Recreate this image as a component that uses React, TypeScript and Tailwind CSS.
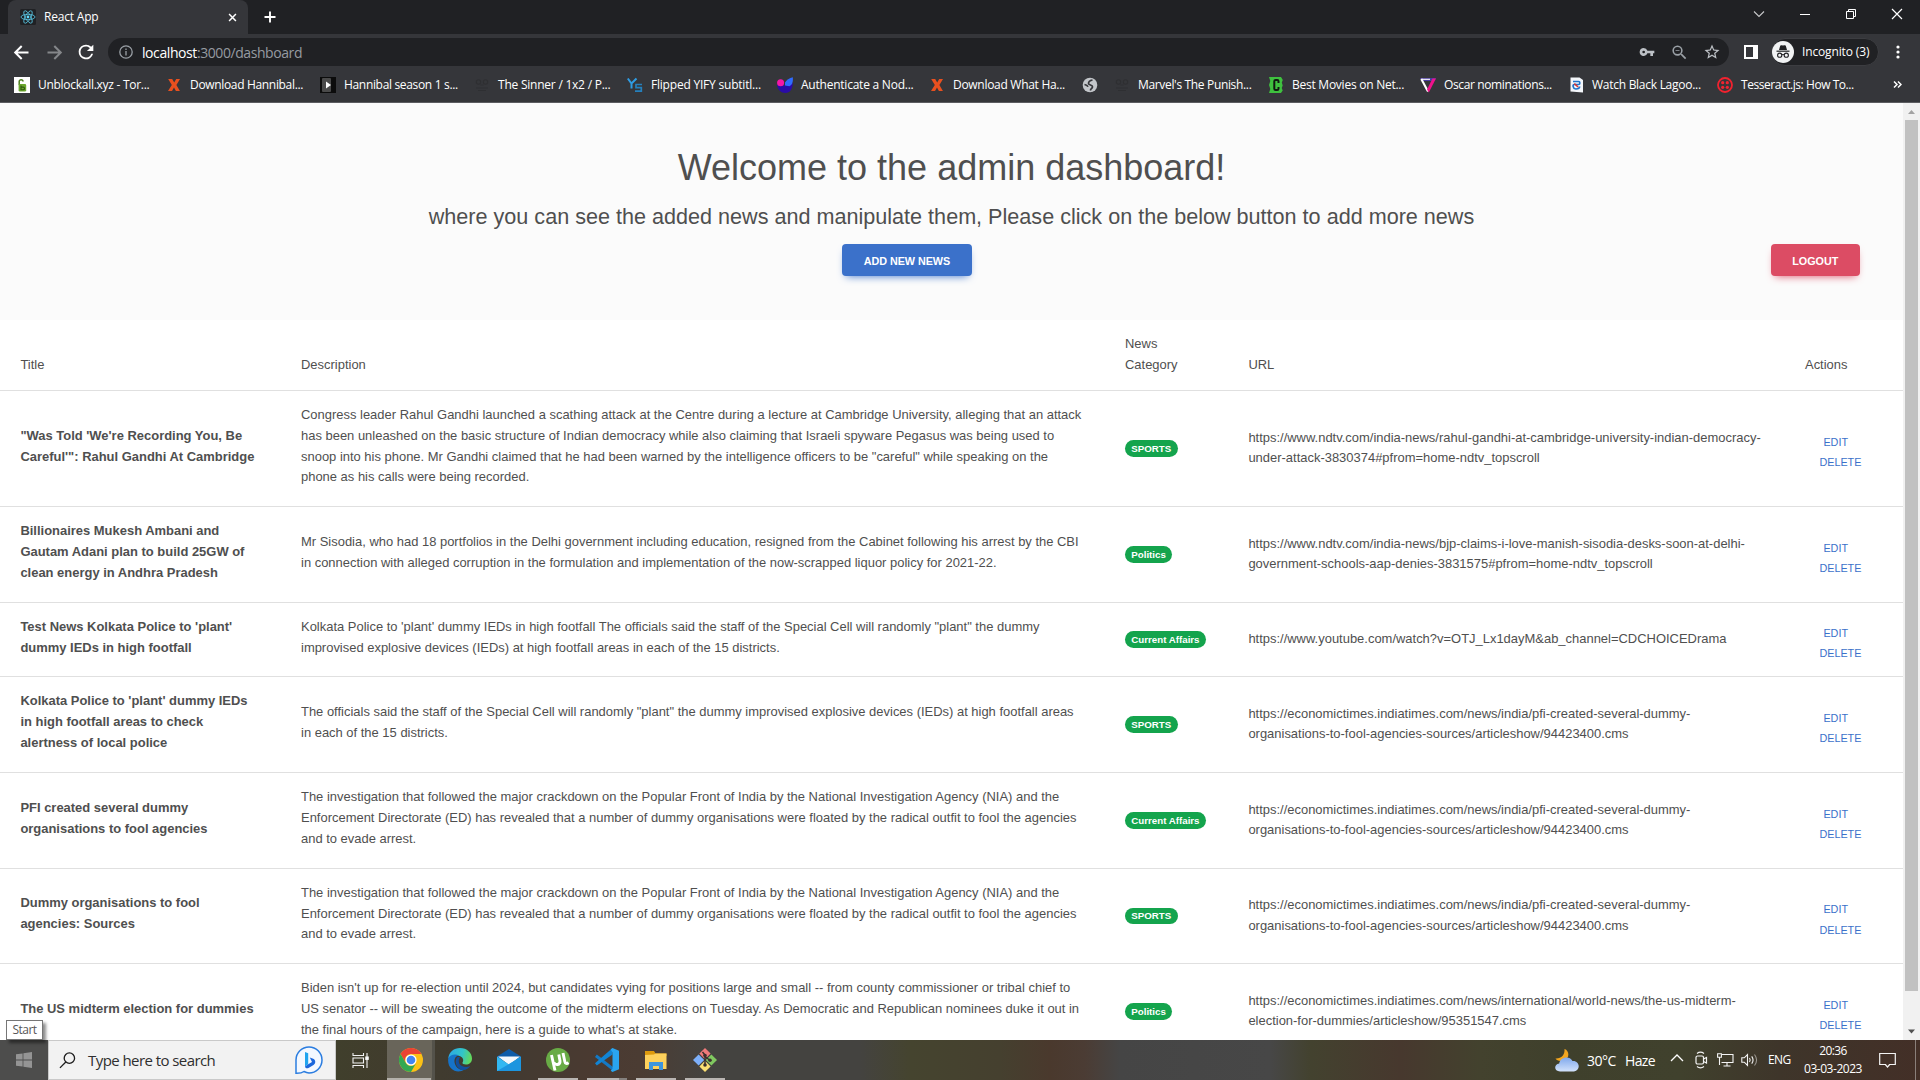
import React from "react";

type IconProps = { className?: string };

/* ---------- Browser icons ---------- */

const ReactLogo = () => (
  <svg viewBox="0 0 16 16" className="size-4 shrink-0">
    <rect width="16" height="16" rx="1.5" fill="#202124" />
    <g fill="none" stroke="#61dafb" strokeWidth="0.8" opacity="0.9">
      <ellipse cx="8" cy="8" rx="7" ry="2.7" />
      <ellipse cx="8" cy="8" rx="7" ry="2.7" transform="rotate(60 8 8)" />
      <ellipse cx="8" cy="8" rx="7" ry="2.7" transform="rotate(120 8 8)" />
    </g>
    <circle cx="8" cy="8" r="1.4" fill="#61dafb" />
  </svg>
);

const Stroke = ({ d, className = "", w = 2, box = 16 }: { d: string; className?: string; w?: number; box?: number }) => (
  <svg viewBox={`0 0 ${box} ${box}`} className={className} fill="none" stroke="currentColor" strokeWidth={w}>
    <path d={d} />
  </svg>
);

const LockFavicon = () => (
  <svg viewBox="0 0 16 16" className="size-4">
    <rect width="16" height="16" fill="#fff" />
    <path d="M5.2 8V4.6a1.9 1.9 0 0 1 3.8 0" fill="none" stroke="#4d7d1f" strokeWidth="1.5" />
    <rect x="4.6" y="7" width="7.6" height="7.6" rx="1.4" fill="#6aa62c" />
    <path d="M7 8.5v4.2h2.2a1.3 1.3 0 0 0 0-2.6H7" fill="none" stroke="#2f5710" strokeWidth="1.1" />
  </svg>
);
const XFavicon = () => (
  <svg viewBox="0 0 16 16" className="size-4">
    <path d="M2.2 2h4l2 3.6L10.2 2H14l-3.600 6 3.500 6H9.900L8 10.500 6 14H2l3.800-6z" fill="#e8501f" />
  </svg>
);
const PlayFavicon = () => (
  <svg viewBox="0 0 16 16" className="size-4">
    <rect width="16" height="16" fill="#0c0c0c" />
    <rect x="2" y="1" width="9" height="14" rx="1" fill="#4a4a4a" />
    <path d="M6 4.500l5 3.500-5 3.500z" fill="#fff" />
  </svg>
);
const DimFavicon = () => (
  <svg viewBox="0 0 16 16" className="size-4" fill="none" stroke="#2e2f32" strokeWidth="1.1">
    <circle cx="4.500" cy="5" r="2.200" />
    <circle cx="11.500" cy="5" r="2.200" />
    <path d="M2 11h12M4 13.500h8M6.500 8h3" />
  </svg>
);
const YsFavicon = () => (
  <svg viewBox="0 0 16 16" className="size-4" fill="none">
    <path d="M.8 1.500L4.500 6.500 9.500 1.500M4.500 6.500V11.500" stroke="#2f9de4" strokeWidth="2" />
    <path d="M15 7.500H9v3.200h5.300v3.500H8" stroke="#2580bd" strokeWidth="1.700" />
  </svg>
);
const HeartFavicon = () => (
  <svg viewBox="0 0 16 16" className="size-4">
    <path d="M0 7.500L8 8.500l7.800-2.500C15.600 12 13 16 8.500 16S.5 12.500 0 7.500z" fill="#2a0ca8" />
    <circle cx="3.600" cy="5.800" r="3.500" fill="#f516a8" />
    <path d="M8 5.500C9.500 3 12.500 1 15.800.3c.4 4-.2 7.500-3.300 9L8 8.500z" fill="#2f6bff" />
  </svg>
);
const GlobeFavicon = () => (
  <svg viewBox="0 0 16 16" className="size-4">
    <circle cx="8" cy="8" r="7.300" fill="#c3c6ca" />
    <path d="M10.500 3C8 3.500 6.500 4.500 6.500 6.500c0 1.800 4 1.300 4 3.200 0 1.600-1.600 1.600-2.200 3.800M2.500 7.500c1.500.3 3 .8 3.500 2.300" fill="none" stroke="#35363a" strokeWidth="1.700" />
  </svg>
);
const CFavicon = () => (
  <svg viewBox="0 0 16 16" className="size-4">
    <path d="M1 0h12l1.800 3-1 2.500.9 3-1 2.500 1 2.500L13 16H1l1.300-4L1 8l1.300-4z" fill="#3fc13f" />
    <path d="M10.500 6V4.300a1.300 1.300 0 0 0-1.300-1.300H7.600A1.300 1.300 0 0 0 6.300 4.300v7.400A1.300 1.300 0 0 0 7.600 13h1.600a1.300 1.300 0 0 0 1.300-1.300V10" fill="none" stroke="#111a12" strokeWidth="2" />
  </svg>
);
const VFavicon = () => (
  <svg viewBox="0 0 16 16" className="size-4">
    <path d="M0 1h16L14.500 4H2z" fill="#4a3aa0" />
    <path d="M1.300 2l6.700 12.500" stroke="#fff" strokeWidth="2.100" fill="none" />
    <path d="M1 2.300h9" stroke="#fff" strokeWidth="1.100" />
    <path d="M16 1.500L8.800 15.500l-1.800-3L12.500 1.500z" fill="#f0128c" />
  </svg>
);
const PageFavicon = () => (
  <svg viewBox="0 0 16 16" className="size-4">
    <path d="M2.500.5h9L15 3v12.500L2.500 14.500z" fill="#f3f6fa" />
    <path d="M5 4.500h5.500c1.800 0 1.800 3 0 3H6.200c-1.800 0-1.500 4.300 1.500 4.500 2.300.1 3.800-1 4-2.500" fill="none" stroke="#2173c9" strokeWidth="1.700" />
    <path d="M6.300 6.700l3.800 3.300" stroke="#d63333" strokeWidth="1.600" />
  </svg>
);
const TwilioFavicon = () => (
  <svg viewBox="0 0 16 16" className="size-4">
    <circle cx="8" cy="8" r="7" fill="none" stroke="#f2222f" strokeWidth="1.800" />
    <g fill="#f2222f">
      <circle cx="5.700" cy="5.700" r="1.600" />
      <circle cx="10.300" cy="5.700" r="1.600" />
      <circle cx="5.700" cy="10.300" r="1.600" />
      <circle cx="10.300" cy="10.300" r="1.600" />
    </g>
  </svg>
);

const bookmarks: { icon: () => React.ReactElement; label: string; width: string; tracking: string }[] = [
  { icon: LockFavicon, label: "Unblockall.xyz - Tor...", width: "w-[152px]", tracking: "tracking-[-0.28px]" },
  { icon: XFavicon, label: "Download Hannibal...", width: "w-[154px]", tracking: "tracking-[-0.33px]" },
  { icon: PlayFavicon, label: "Hannibal season 1 s...", width: "w-[154px]", tracking: "tracking-[-0.33px]" },
  { icon: DimFavicon, label: "The Sinner / 1x2 / P...", width: "w-[153px]", tracking: "tracking-[-0.23px]" },
  { icon: YsFavicon, label: "Flipped YIFY subtitl...", width: "w-[150px]", tracking: "tracking-[-0.21px]" },
  { icon: HeartFavicon, label: "Authenticate a Nod...", width: "w-[152px]", tracking: "tracking-[-0.23px]" },
  { icon: XFavicon, label: "Download What Ha...", width: "w-[153px]", tracking: "tracking-[-0.29px]" },
  { icon: GlobeFavicon, label: "", width: "w-[32px]", tracking: "" },
  { icon: DimFavicon, label: "Marvel's The Punish...", width: "w-[154px]", tracking: "tracking-[-0.34px]" },
  { icon: CFavicon, label: "Best Movies on Net...", width: "w-[152px]", tracking: "tracking-[-0.25px]" },
  { icon: VFavicon, label: "Oscar nominations...", width: "w-[148px]", tracking: "tracking-[-0.37px]" },
  { icon: PageFavicon, label: "Watch Black Lagoo...", width: "w-[149px]", tracking: "tracking-[-0.27px]" },
  { icon: TwilioFavicon, label: "Tesseract.js: How To...", width: "w-[150px]", tracking: "tracking-[-0.45px]" },
];

function TabStrip() {
  return (
    <div className="flex h-[34px] bg-[#202124] pl-2 text-white">
      <div className="flex w-60 items-center rounded-t-lg bg-[#35363a] pl-3 pr-[10px]">
        <ReactLogo />
        <span className="ml-2 text-[12px] tracking-[-0.2px]">React App</span>
        <Stroke d="M1.200 1.200l7.600 7.600M8.800 1.200L1.200 8.800" box={10} w={1.700} className="ml-auto mr-px size-[9px]" />
      </div>
      <Stroke d="M6 .5v11M.5 6h11" box={12} w={1.900} className="ml-4 mt-[11px] size-3" />
      <div className="ml-auto flex h-7 items-center">
        <div className="flex w-[46px] justify-center"><Stroke d="M1 3.500l5 5 5-5" box={12} w={1.100} className="size-3 text-[#c8c9cb]" /></div>
        <div className="flex w-[46px] justify-center"><Stroke d="M1 6.500h10" box={12} w={1} className="size-3" /></div>
        <div className="flex w-[46px] justify-center"><Stroke d="M1.500 3.500h7v7h-7zM3.500 3.500v-2h7v7h-2" box={12} w={1} className="size-3" /></div>
        <div className="flex w-[46px] justify-center"><Stroke d="M1 1l10 10M11 1L1 11" box={12} w={1.200} className="size-3" /></div>
      </div>
    </div>
  );
}

const KeyIcon = ({ className }: IconProps) => (
  <svg viewBox="0 0 24 24" className={className} fill="currentColor">
    <path d="M12.650 10A5.990 5.990 0 0 0 7 6a6 6 0 1 0 5.650 8H17v4h4v-4h2v-4H12.650zM7 14a2 2 0 1 1 0-4 2 2 0 0 1 0 4z" />
  </svg>
);
const StarIcon = ({ className }: IconProps) => (
  <svg viewBox="0 0 24 24" className={className} fill="currentColor">
    <path d="M22 9.240l-7.190-.62L12 2 9.190 8.630 2 9.240l5.460 4.730L5.820 21 12 17.270 18.180 21l-1.630-7.030L22 9.240zM12 15.400l-3.760 2.270 1-4.280-3.320-2.880 4.380-.38L12 6.100l1.710 4.040 4.380.38-3.320 2.880 1 4.280L12 15.400z" />
  </svg>
);
const ZoomOutIcon = ({ className }: IconProps) => (
  <svg viewBox="0 0 24 24" className={className} fill="currentColor">
    <path d="M15.500 14h-.79l-.28-.27A6.470 6.470 0 0 0 16 9.500 6.500 6.500 0 1 0 9.500 16c1.610 0 3.090-.59 4.230-1.570l.27.28v.79l5 4.990L20.490 19l-4.990-5zm-6 0a4.500 4.500 0 1 1 0-9 4.500 4.500 0 0 1 0 9zM7 9h5v1H7z" />
  </svg>
);
const IncognitoIcon = () => (
  <svg viewBox="0 0 22 22" className="size-[22px]">
    <circle cx="11" cy="11" r="11" fill="#f1f3f4" />
    <path d="M7 9l1.200-4.200c.2-.6.7-.8 1.300-.6l1.500.4 1.500-.4c.6-.2 1.100 0 1.300.6L15 9z" fill="#202124" />
    <path d="M4.500 10.200h13" stroke="#202124" strokeWidth="1.200" />
    <g fill="none" stroke="#202124" strokeWidth="1.100">
      <circle cx="7.700" cy="14.200" r="2.100" />
      <circle cx="14.300" cy="14.200" r="2.100" />
      <path d="M9.800 13.900c.7-.5 1.700-.5 2.400 0" />
    </g>
  </svg>
);

function Toolbar() {
  return (
    <div className="flex h-9 items-center bg-[#35363a] pl-3 text-white">
      <Stroke d="M15.500 8.500H2.500M8.700 2L2.200 8.500l6.500 6.500" box={17} w={2} className="ml-px size-[17px]" />
      <Stroke d="M1.500 8.500h13M8.300 2l6.500 6.500L8.300 15" box={17} w={2} className="ml-4 size-[17px] text-[#85878a]" />
      <svg viewBox="0 0 24 24" className="ml-3 size-[22px]" fill="currentColor">
        <path d="M17.650 6.350A7.950 7.950 0 0 0 12 4a8 8 0 1 0 7.730 10h-2.080A6 6 0 1 1 12 6c1.660 0 3.140.69 4.220 1.780L13 11h7V4l-2.350 2.350z" />
      </svg>
      <div className="ml-[11px] flex h-7 w-[1621px] items-center rounded-full bg-[#202124] pl-[11px]">
        <svg viewBox="0 0 14 14" className="size-[14px] text-[#9aa0a6]" fill="none" stroke="currentColor" strokeWidth="1.300">
          <circle cx="7" cy="7" r="6.200" />
          <path d="M7 6v4.500M7 3.500v1.400" />
        </svg>
        <span className="ml-[9px] whitespace-nowrap text-[14px] tracking-[-0.42px] text-[#969ba1]">
          <span className="text-white">localhost</span>:3000/dashboard
        </span>
        <KeyIcon className="ml-auto size-4 text-[#bdc1c6]" />
        <ZoomOutIcon className="ml-[15px] size-[19px] text-[#9aa0a6]" />
        <StarIcon className="ml-3.5 mr-2 size-[18px] text-[#bdc1c6]" />
      </div>
      <div className="ml-[15px] h-[14px] w-[14px] border-2 border-r-[5px] border-white" />
      <div className="ml-[13px] flex h-7 w-[108px] items-center rounded-full border border-[#3c3d41] bg-[#202124]">
        <IncognitoIcon />
        <span className="ml-2 whitespace-nowrap text-[12px] tracking-[-0.14px]">Incognito (3)</span>
      </div>
      <svg viewBox="0 0 4 16" className="ml-[17px] h-4 w-1" fill="currentColor">
        <circle cx="2" cy="3" r="1.600" />
        <circle cx="2" cy="8" r="1.600" />
        <circle cx="2" cy="13" r="1.600" />
      </svg>
    </div>
  );
}

function BookmarksBar() {
  return (
    <div className="flex h-[33px] items-center border-b border-[#5c5d61] bg-[#35363a] pb-[3px] pl-3.5 text-white">
      {bookmarks.map(({ icon: Icon, label, width, tracking }, i) => (
        <div key={i} className={`flex shrink-0 items-center gap-2 ${width}`}>
          <Icon />
          <span className={`whitespace-nowrap text-[12px] ${tracking}`}>{label}</span>
        </div>
      ))}
      <Stroke d="M1 1.500l3 3-3 3M5 1.500l3 3-3 3" box={9} w={1.500} className="ml-[26px] size-[9px]" />
    </div>
  );
}

/* ---------- Dashboard page ---------- */

type News = { title: string[]; description: string[]; category: string; url: string[]; height: string };

const ndtv = "https://www.ndtv.com/india-news/";
const economicTimes = [
  "https://economictimes.indiatimes.com/news/india/pfi-created-several-dummy-",
  "organisations-to-fool-agencies-sources/articleshow/94423400.cms",
];
const investigation = [
  "The investigation that followed the major crackdown on the Popular Front of India by the National Investigation Agency (NIA) and the",
  "Enforcement Directorate (ED) has revealed that a number of dummy organisations were floated by the radical outfit to fool the agencies",
  "and to evade arrest.",
];

const news: News[] = [
  {
    title: ["\"Was Told 'We're Recording You, Be", "Careful'\": Rahul Gandhi At Cambridge"],
    description: [
      "Congress leader Rahul Gandhi launched a scathing attack at the Centre during a lecture at Cambridge University, alleging that an attack",
      "has been unleashed on the basic structure of Indian democracy while also claiming that Israeli spyware Pegasus was being used to",
      "snoop into his phone. Mr Gandhi claimed that he had been warned by the intelligence officers to be \"careful\" while speaking on the",
      "phone as his calls were being recorded.",
    ],
    category: "SPORTS",
    url: [ndtv + "rahul-gandhi-at-cambridge-university-indian-democracy-", "under-attack-3830374#pfrom=home-ndtv_topscroll"],
    height: "h-[116px]",
  },
  {
    title: ["Billionaires Mukesh Ambani and", "Gautam Adani plan to build 25GW of", "clean energy in Andhra Pradesh"],
    description: [
      "Mr Sisodia, who had 18 portfolios in the Delhi government including education, resigned from the Cabinet following his arrest by the CBI",
      "in connection with alleged corruption in the formulation and implementation of the now-scrapped liquor policy for 2021-22.",
    ],
    category: "Politics",
    url: [ndtv + "bjp-claims-i-love-manish-sisodia-desks-soon-at-delhi-", "government-schools-aap-denies-3831575#pfrom=home-ndtv_topscroll"],
    height: "h-[96px]",
  },
  {
    title: ["Test News Kolkata Police to 'plant'", "dummy IEDs in high footfall"],
    description: [
      "Kolkata Police to 'plant' dummy IEDs in high footfall The officials said the staff of the Special Cell will randomly \"plant\" the dummy",
      "improvised explosive devices (IEDs) at high footfall areas in each of the 15 districts.",
    ],
    category: "Current Affairs",
    url: ["https://www.youtube.com/watch?v=OTJ_Lx1dayM&ab_channel=CDCHOICEDrama"],
    height: "h-[74px]",
  },
  {
    title: ["Kolkata Police to 'plant' dummy IEDs", "in high footfall areas to check", "alertness of local police"],
    description: [
      "The officials said the staff of the Special Cell will randomly \"plant\" the dummy improvised explosive devices (IEDs) at high footfall areas",
      "in each of the 15 districts.",
    ],
    category: "SPORTS",
    url: economicTimes,
    height: "h-[96px]",
  },
  {
    title: ["PFI created several dummy", "organisations to fool agencies"],
    description: investigation,
    category: "Current Affairs",
    url: economicTimes,
    height: "h-[96px]",
  },
  {
    title: ["Dummy organisations to fool", "agencies: Sources"],
    description: investigation,
    category: "SPORTS",
    url: economicTimes,
    height: "h-[95px]",
  },
  {
    title: ["The US midterm election for dummies"],
    description: [
      "Biden isn't up for re-election until 2024, but candidates vying for positions large and small -- from county commissioner or tribal chief to",
      "US senator -- will be sweating the outcome of the midterm elections on Tuesday. As Democratic and Republican nominees duke it out in",
      "the final hours of the campaign, here is a guide to what's at stake.",
    ],
    category: "Politics",
    url: ["https://economictimes.indiatimes.com/news/international/world-news/the-us-midterm-", "election-for-dummies/articleshow/95351547.cms"],
    height: "h-[96px]",
  },
];

const Lines = ({ lines }: { lines: string[] }) => (
  <div className="whitespace-nowrap">
    {lines.map((line, i) => (
      <div key={i}>{line}</div>
    ))}
  </div>
);

function NewsRow({ item }: { item: News }) {
  return (
    <div className={`grid shrink-0 grid-cols-[281px_824px_123px_557px_118px] border-b border-[#e0e0e0] ${item.height}`}>
      <div className="flex items-center pb-1 pl-[20.400px] font-bold"><Lines lines={item.title} /></div>
      <div className="flex items-center pb-1 pl-5"><Lines lines={item.description} /></div>
      <div className="flex items-center pl-5">
        <span className="whitespace-nowrap rounded-full bg-[#14a44d] px-[6.300px] py-[3.400px] text-[9.720px] font-bold leading-[9.720px] text-white">
          {item.category}
        </span>
      </div>
      <div className="flex items-center pl-[20.400px] pb-px leading-[20.400px]"><Lines lines={item.url} /></div>
      <div className="flex items-center pl-[34.400px] pt-[7px] text-[10.800px] font-medium leading-[20.400px] text-[#3b71ca]">
        <div className="flex flex-col">
          <button className="pl-1 text-left">EDIT</button>
          <button className="text-left">DELETE</button>
        </div>
      </div>
    </div>
  );
}

function Dashboard() {
  return (
    <main className="flex min-w-0 flex-1 flex-col overflow-hidden bg-white text-[#4f4f4f] [font-family:'Liberation_Sans',Arial,sans-serif]">
      <section className="flex h-[217px] shrink-0 flex-col bg-[#fbfbfb] px-[43.200px] pt-[43.200px] text-center">
        <h1 className="mb-[14.400px] text-[36px] font-medium leading-[43.200px]">Welcome to the admin dashboard!</h1>
        <h4 className="mb-[14.400px] text-[21.600px] font-medium leading-[25.900px]">
          where you can see the added news and manipulate them, Please click on the below button to add more news
        </h4>
        <div className="flex">
          <div className="flex flex-1 justify-center">
            <button className="h-8 rounded bg-[#3b71ca] px-[21.600px] pt-0.5 text-[10.800px] font-bold tracking-[-0.05px] text-white shadow-[0_4px_9px_-4px_#3b71ca]">ADD NEW NEWS</button>
          </div>
          <button className="h-8 rounded bg-[#dc4c64] px-[21.600px] pt-0.5 text-[10.800px] font-bold tracking-[-0.05px] text-white shadow-[0_4px_9px_-4px_#dc4c64]">LOGOUT</button>
        </div>
      </section>
      <section className="flex flex-col text-[12.960px] leading-[20.740px]">
        <div className="grid h-[71px] shrink-0 grid-cols-[281px_824px_123px_557px_118px] items-end border-b border-[#e0e0e0] pb-[14.400px]">
          <div className="pl-[20.400px]">Title</div>
          <div className="pl-5">Description</div>
          <div className="pl-5">News<br />Category</div>
          <div className="pl-[20.400px]">URL</div>
          <div className="pl-5">Actions</div>
        </div>
        {news.map((item, i) => (
          <NewsRow key={i} item={item} />
        ))}
      </section>
    </main>
  );
}

function Scrollbar() {
  return (
    <div className="flex w-[17px] shrink-0 flex-col items-center bg-[#f1f1f1]">
      <svg viewBox="0 0 17 17" className="size-[17px]"><path d="M5 11h7L8.500 7z" fill="#a3a3a3" /></svg>
      <div className="h-[871px] w-[13px] bg-[#c1c1c1]" />
      <svg viewBox="0 0 17 17" className="mt-auto size-[17px]"><path d="M5 6.500h7L8.500 10.500z" fill="#505050" /></svg>
    </div>
  );
}

/* ---------- Taskbar ---------- */

const BingIcon = () => (
  <svg viewBox="0 0 30 30" className="size-[30px]">
    <path d="M2 28.300V15A13 13 0 1 1 15 28c-2-.2-3.500-.8-5-1.500-2 1.500-5 1.900-8 1.800z" fill="#f3f8ff" stroke="#2b7de0" strokeWidth="1.500" />
    <path d="M11 7l3.200 1.200v11L11 21.500z" fill="#1fa4ee" />
    <path d="M14.200 19.200L18 17l-2.200-4.500 3.400 1.300c2.600 1.200 2.800 4.700.3 6.200L14.500 23c-1.800.9-3.500-.3-3.500-1.500z" fill="#1a66dc" />
  </svg>
);
const TaskViewIcon = () => (
  <svg viewBox="0 0 17 17" className="size-[17px]" fill="none" stroke="#f2f2f2" strokeWidth="1.100">
    <path d="M1 1v2.500h10.500V1M1 16v-2.500h10.500V16M1 6h10.500v5H1zM15 1v15" />
    <rect x="13.800" y="5" width="2.400" height="2.400" fill="#fff" />
  </svg>
);
const ChromeIcon = () => (
  <svg viewBox="0 0 24 24" className="size-6">
    <circle cx="12" cy="12" r="12" fill="#fbc116" />
    <path d="M1.600 6A12 12 0 0 1 22.400 6H12a6 6 0 0 0-5.200 9z" fill="#ea4335" />
    <path d="M1.600 6A12 12 0 0 0 12 24l5.200-9a6 6 0 0 1-10.400 0z" fill="#34a853" />
    <circle cx="12" cy="12" r="5.600" fill="#fff" />
    <circle cx="12" cy="12" r="4.300" fill="#4285f4" />
  </svg>
);
const EdgeIcon = () => (
  <svg viewBox="0 0 24 24" className="size-6">
    <defs>
      <linearGradient id="edgeTop" x1="0" x2="1" y1="0.200" y2="0.400">
        <stop offset="0" stopColor="#2ba7e6" />
        <stop offset="0.600" stopColor="#32c5c9" />
        <stop offset="1" stopColor="#63d95b" />
      </linearGradient>
    </defs>
    <path d="M.2 10.500C1 4 6 0 12 0c7 0 12 5 12 10.500 0 4-3 6-6 6-2.500 0-4-1-3.500-2 1.500-2 .8-5.500-3-6.500C7 7 2 8 .2 10.500z" fill="url(#edgeTop)" />
    <path d="M.2 10.500C2 6.500 7.500 5.500 11 7.500 7 8 5.500 12 7 16c1.500 4.500 6 6.500 9.500 5.500C10 26-1 22.500.2 10.500z" fill="#1673c8" />
    <path d="M9.500 9C6.500 12 7 18 12.500 21.500c4 1.500 8-.5 9.800-3.500-4 2-9.500.8-11-2.500-1-2.300-.5-4.500.7-6.500z" fill="#124f9c" />
  </svg>
);
const MailIcon = () => (
  <svg viewBox="0 0 24 24" className="size-6">
    <path d="M0 8.500L12 1l12 7.500V12H0z" fill="#0f5ca8" />
    <path d="M1 8.500h22L12 17z" fill="#f4f8fc" />
    <path d="M0 8.500L12 16.500 24 8.500V23H0z" fill="#32b8f2" />
    <path d="M0 23L24 9v14z" fill="#1c95df" />
  </svg>
);
const UTorrentIcon = () => (
  <svg viewBox="0 0 24 24" className="size-6">
    <circle cx="12" cy="12" r="12" fill="#68ab45" />
    <path d="M5.500 7l3.500 15.500M8 14.500c1.500 3.300 6.300 2.500 6-1.500L12.800 6.500M17 5l1.800 8.500c.4 2.300 2 2.500 3.800 1.300" fill="none" stroke="#fff" strokeWidth="2.900" />
  </svg>
);
const VSCodeIcon = () => (
  <svg viewBox="0 0 24 24" className="size-6">
    <path d="M1.800 6.500L18 19v4L0 9z" fill="#1479c4" />
    <path d="M1.800 17.500L0 15.200 17.500 0v6.500z" fill="#1184d4" />
    <path d="M17.500 0L24 2.700v18.600L17.500 24l-1.800-1.200 1.800-2V4.500l-1.800-3z" fill="#2aa5f0" />
  </svg>
);
const ExplorerIcon = () => (
  <svg viewBox="0 0 24 24" className="size-6">
    <path d="M1 3h9l1.500 2.500H22.500V8H1z" fill="#dd9a0d" />
    <path d="M1 7l9-.5L11.500 5.500h11V21H1z" fill="#fdd15c" />
    <path d="M5 22v-8h14v8h-4v-4H9v4z" fill="#3d95dd" />
  </svg>
);
const GitIcon = () => (
  <svg viewBox="0 0 24 24" className="size-6">
    <path d="M12 0l5.600 5.600L12 11.200 6.400 5.600z" fill="#f07a7a" />
    <path d="M24 12l-5.600-5.600L12.800 12l5.600 5.600z" fill="#80c860" />
    <path d="M12 24l-5.600-5.600 5.600-5.600 5.600 5.600z" fill="#fbdf73" />
    <path d="M0 12l5.600-5.600 5.600 5.600-5.600 5.600z" fill="#7db0fb" />
    <path d="M9.500 4l2.500 3v10M12 8.500l4.500 3.500" fill="none" stroke="#3c302e" strokeWidth="1.500" />
    <circle cx="12" cy="7.500" r="1.800" fill="#3c302e" />
    <circle cx="12" cy="17" r="1.800" fill="#3c302e" />
    <circle cx="17" cy="12.300" r="1.800" fill="#3c302e" />
  </svg>
);
const WeatherIcon = () => (
  <svg viewBox="0 0 24 23" className="h-[23px] w-6">
    <defs>
      <linearGradient id="cloud" x1="0" x2="0" y1="0" y2="1">
        <stop offset="0" stopColor="#7fa8ec" />
        <stop offset="1" stopColor="#d2e2fb" />
      </linearGradient>
    </defs>
    <path d="M9.500 0c5 1.500 5.500 9.500-.5 11.500-4 1.200-7.500 0-8.500-2C6 10 10 6 9.500 0z" fill="#f3a61f" />
    <path d="M5 22.500c-6 0-6.500-7-.8-8C5 8 14.500 6 17.500 12c7.500-.5 8.500 9.500 1.500 10.500z" fill="url(#cloud)" />
  </svg>
);

const apps = [
  { icon: ChromeIcon, slot: "w-12 bg-[#69655a] shadow-[inset_-3px_0_#54524a]", bar: "mr-1 w-11 bg-[#b4b1ab]" },
  { icon: EdgeIcon, slot: "w-[49px]", bar: "" },
  { icon: MailIcon, slot: "w-[49px]", bar: "" },
  { icon: UTorrentIcon, slot: "w-[49px]", bar: "w-10 bg-[#b9b5b2]" },
  { icon: VSCodeIcon, slot: "w-[49px]", bar: "w-10 border-r-8 border-[#85817e] bg-[#b9b5b2]" },
  { icon: ExplorerIcon, slot: "w-[49px]", bar: "w-10 bg-[#b9b5b2]" },
  { icon: GitIcon, slot: "w-[49px]", bar: "w-10 bg-[#b9b5b2]" },
];

function Taskbar() {
  return (
    <div className="flex h-10 shrink-0 bg-[linear-gradient(90deg,#403f2c_336px,#413c2d_400px,#3f3a31_480px,#4a3a31_590px,#4b3c33_640px,#444340_710px,#444340_860px,#45442f_910px,#45402f_1000px,#4a392d_1050px,#4b3c34_1085px,#454545_1120px,#474747_1270px,#43422f_1310px,#47382e_1400px,#43422e_1480px,#3f402c_1560px,#40412d_1680px,#3e352a_1780px,#432f27_1920px)] text-white">
      <div className="flex w-12 items-center justify-center bg-[#4d4d4c]">
        <svg viewBox="0 0 16 16" className="size-4" fill="#949494">
          <path d="M0 2.300l6.600-.9v6.100H0zM7.400 1.300L16 0v7.500H7.400zM0 8.400h6.600v6.200L0 13.700zM7.400 8.400H16V16l-8.600-1.200z" />
        </svg>
      </div>
      <div className="flex w-[288px] items-center border border-[#c9c9c9] bg-[#f2f2f2] pl-[10px] text-[#2f2f2f]">
        <svg viewBox="0 0 18 18" className="size-[17px]" fill="none" stroke="#1d1d1d" strokeWidth="1.400">
          <circle cx="11" cy="6.500" r="5.500" />
          <path d="M7.200 10.600L1 16.800" />
        </svg>
        <span className="ml-3 whitespace-nowrap text-[15px] tracking-[-0.57px]">Type here to search</span>
        <div className="ml-auto mr-[11px]"><BingIcon /></div>
      </div>
      <div className="flex w-[51px] items-center justify-center pr-[3px]"><TaskViewIcon /></div>
      {apps.map(({ icon: Icon, slot, bar }, i) => (
        <div key={i} className={`flex h-10 flex-col items-center ${slot}`}>
          <div className="mt-2 h-[30px]"><Icon /></div>
          <div className={`h-0.5 ${bar}`} />
        </div>
      ))}
      <div className="ml-auto flex items-center">
        <WeatherIcon />
        <span className="ml-2 w-[38px] whitespace-nowrap text-[14px] tracking-[-0.531px]">30°C</span>
        <span className="w-[45px] whitespace-nowrap text-[14px] tracking-[-0.631px]">Haze</span>
        <Stroke d="M1 9l6-6 6 6" box={14} w={1.300} className="mb-0.5 size-[14px]" />
        <svg viewBox="0 0 14 18" className="ml-[10px] h-[18px] w-[14px]" fill="none" stroke="#f4f4f4" strokeWidth="1.200">
          <rect x="2" y="5" width="7.500" height="8" rx="1.500" />
          <path d="M9.500 8l3-1.500v5.500l-3-1.500M3 2.500c2-1.500 5-1.500 7 0M3 15.500c2 1.500 5 1.500 7 0" />
        </svg>
        <svg viewBox="0 0 17 14" className="ml-[9px] h-[14px] w-[17px]" fill="none" stroke="#f4f4f4" strokeWidth="1.100">
          <path d="M5 1.500h11v8H4.500M10 9.500V13M6.500 13h7M.6.8h3.800v3.400H.6zM2.500 4.200V12" />
        </svg>
        <svg viewBox="0 0 17 14" className="ml-[7px] h-[14px] w-[17px]" fill="none" stroke="#f4f4f4" strokeWidth="1.100">
          <path d="M.8 4.800h2.500L6.500 1.500v11L3.300 9.200H.8zM8.500 5c.9 1.300.9 2.700 0 4M10.700 3.300c1.700 2.300 1.700 5.100 0 7.400" />
          <path d="M13.500 1.500c2.500 3.300 2.500 7.700 0 11" opacity="0.500" />
        </svg>
        <span className="ml-[10px] w-[36px] whitespace-nowrap text-[12px] tracking-[-0.650px]">ENG</span>
        <div className="flex w-[58px] flex-col items-center text-[12px] leading-[18.500px]">
          <span className="tracking-[-0.600px]">20:36</span>
          <span className="whitespace-nowrap tracking-[-0.461px]">03-03-2023</span>
        </div>
        <svg viewBox="0 0 17 17" className="ml-[17px] size-[17px]" fill="none" stroke="#f4f4f4" strokeWidth="1.200">
          <path d="M.7 1.500h15.600v11H10.500v.2L8.500 15l-2-2.300v-.2H.7z" />
        </svg>
        <div className="ml-[19px] mr-1 h-10 w-px bg-[#8a7f7a]" />
      </div>
    </div>
  );
}

export default function App() {
  return (
    <div className="relative flex h-[1080px] w-[1920px] flex-col overflow-hidden [font-family:'Open_Sans','Noto_Sans',sans-serif]">
      <TabStrip />
      <Toolbar />
      <BookmarksBar />
      <div className="flex min-h-0 flex-1">
        <Dashboard />
        <Scrollbar />
      </div>
      <Taskbar />
      <div className="absolute left-1.5 top-[1020px] flex h-5 w-[37px] items-center justify-center border border-[#767676] bg-white text-[12px] tracking-[-0.541px] text-[#575757] shadow-[3px_3px_3px_rgba(0,0,0,0.45)]">
        Start
      </div>
    </div>
  );
}
